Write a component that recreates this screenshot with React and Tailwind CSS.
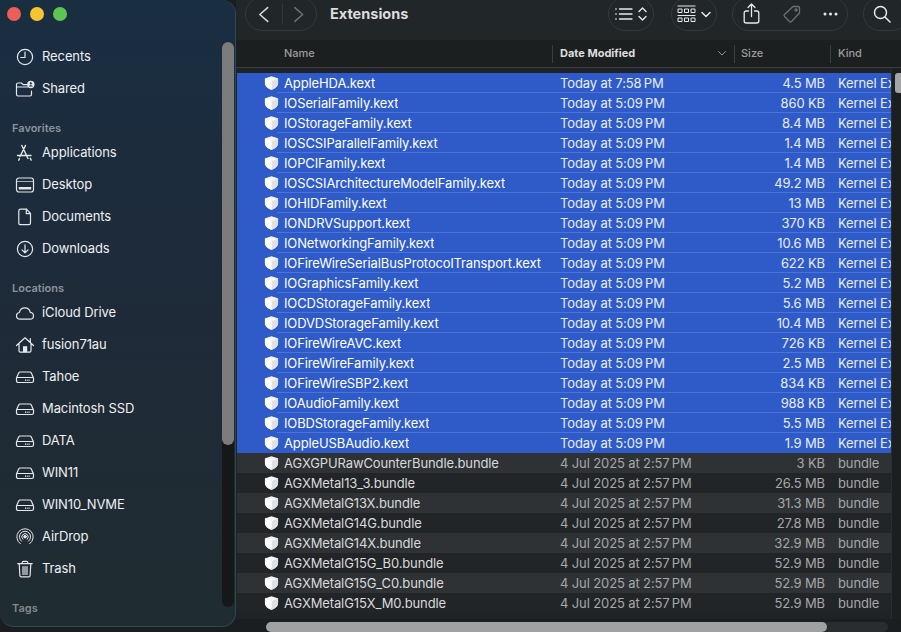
import React from "react";

const S = ({ children, w = 20, h = 20, vb = "0 0 20 20", sw = 1.2, c = "" }) => (
  <svg width={w} height={h} viewBox={vb} fill="none" stroke="currentColor" strokeWidth={sw} strokeLinecap="round" strokeLinejoin="round" className={c}>
    {children}
  </svg>
);

const Drive = () => (
  <S>
    <path d="M5.2 5h9.6c.7 0 1.2.3 1.5 1l2 4.4c.2.4.2.7.2 1.1v2.300c0 1-.7 1.700-1.700 1.700H3.200c-1 0-1.700-.7-1.700-1.700v-2.300c0-.4 0-.7.2-1.100l2-4.400c.3-.7.8-1 1.500-1z" />
    <path d="M2 10.500h16" />
    <path d="M10 13.200h5.500" strokeDasharray="0.9 0.9" strokeWidth="1.500" strokeLinecap="butt" />
  </S>
);

const icons = {
  clock: (
    <S>
      <circle cx="10" cy="10" r="7.600" />
      <path d="M10 5.200V10.500H5.800" />
    </S>
  ),
  shared: (
    <S>
      <path d="M1.500 5.500c0-1 .6-1.500 1.500-1.500h3.500l1.700 1.700h4.300M1.500 5.500V15.600c0 .9.500 1.400 1.400 1.400h12.200c.9 0 1.400-.5 1.400-1.400V12" />
      <path d="M1.500 8h11" />
      <circle cx="15.800" cy="5.500" r="3.700" fill="currentColor" stroke="none" />
      <circle cx="15.800" cy="4.400" r="1.100" fill="#1b2d40" stroke="none" />
      <path d="M13.800 7.600c.4-1 1.100-1.400 2-1.400s1.600.4 2 1.400z" fill="#1b2d40" stroke="none" />
    </S>
  ),
  apps: (
    <S>
      <path d="M10.500 2.500 5 13.500M6.800 2.500 13 15.500M2.500 12.500h13.500M4.500 15.700l-.8 1.500M15.300 15.300l.9 1.800" strokeWidth="1.400" />
    </S>
  ),
  desktop: (
    <S>
      <rect x="1.500" y="3" width="17" height="14" rx="2.500" />
      <path d="M1.500 6.500h17" strokeWidth="0.700" />
      <rect x="3.800" y="12" width="12.400" height="2.600" fill="currentColor" stroke="none" rx=".4" />
    </S>
  ),
  doc: (
    <S>
      <path d="M5.500 2.200h6l4 4.300v9.500c0 1-.7 1.700-1.700 1.700H5.500c-1 0-1.700-.7-1.700-1.700V4c0-1 .7-1.800 1.700-1.800z" />
      <path d="M11.300 2.200v4.500h4.200" />
    </S>
  ),
  down: (
    <S>
      <circle cx="10" cy="10" r="7.600" />
      <path d="M10 5.800v8M7 10.800l3 3 3-3" />
    </S>
  ),
  cloud: (
    <S>
      <path d="M5.200 16.200c-2.200 0-3.700-1.500-3.700-3.400 0-1.800 1.300-3.100 2.900-3.300.5-2.800 2.700-4.700 5.400-4.700 2.800 0 4.900 1.900 5.500 4.500 2 .2 3.200 1.600 3.200 3.400 0 2-1.500 3.500-3.500 3.500z" />
    </S>
  ),
  home: (
    <S>
      <path d="M1.500 10.500 10 2.800l8.500 7.700M15.300 7.500V3.700M4 8.500v7.300c0 .9.500 1.400 1.400 1.400h9.200c.9 0 1.400-.5 1.400-1.400V8.500" />
      <rect x="8" y="11.200" width="4.200" height="6" fill="currentColor" stroke="none" />
    </S>
  ),
  drive: <Drive />,
  airdrop: (
    <S sw={1}>
      <path d="M5.300 16.700A8.200 8.200 0 1 1 14.700 16.700" />
      <path d="M6.500 14.200A5.600 5.600 0 1 1 13.500 14.200" />
      <path d="M7.800 12.200A3.200 3.200 0 1 1 12.200 12.200" />
      <circle cx="10" cy="9.700" r="1.300" fill="currentColor" />
    </S>
  ),
  trash: (
    <S>
      <path d="M2.800 4.700h14.400M7.300 4.500V3.300c0-.6.400-1 1-1h3.400c.6 0 1 .4 1 1v1.200M4.200 4.700l.7 12c.1.800.5 1.200 1.300 1.200h7.600c.8 0 1.200-.4 1.300-1.200l.7-12M8 7.500v8M10 7.500v8M12 7.500v8" />
    </S>
  ),
};

const sidebar = [
  { items: [["clock", "Recents"], ["shared", "Shared"]] },
  { label: "Favorites", items: [["apps", "Applications"], ["desktop", "Desktop"], ["doc", "Documents"], ["down", "Downloads"]] },
  {
    label: "Locations",
    items: [["cloud", "iCloud Drive"], ["home", "fusion71au"], ["drive", "Tahoe"], ["drive", "Macintosh SSD"], ["drive", "DATA"], ["drive", "WIN11"], ["drive", "WIN10_NVME"], ["airdrop", "AirDrop"], ["trash", "Trash"]],
  },
];

const T = "Today at 5:09\u2009PM";
const J = "4 Jul 2025 at 2:57\u2009PM";
const K = "Kernel Extension";
const rows = [
  ["AppleHDA.kext", "Today at 7:58\u2009PM", "4.5 MB"],
  ["IOSerialFamily.kext", T, "860 KB"],
  ["IOStorageFamily.kext", T, "8.4 MB"],
  ["IOSCSIParallelFamily.kext", T, "1.4 MB"],
  ["IOPCIFamily.kext", T, "1.4 MB"],
  ["IOSCSIArchitectureModelFamily.kext", T, "49.2 MB"],
  ["IOHIDFamily.kext", T, "13 MB"],
  ["IONDRVSupport.kext", T, "370 KB"],
  ["IONetworkingFamily.kext", T, "10.6 MB"],
  ["IOFireWireSerialBusProtocolTransport.kext", T, "622 KB"],
  ["IOGraphicsFamily.kext", T, "5.2 MB"],
  ["IOCDStorageFamily.kext", T, "5.6 MB"],
  ["IODVDStorageFamily.kext", T, "10.4 MB"],
  ["IOFireWireAVC.kext", T, "726 KB"],
  ["IOFireWireFamily.kext", T, "2.5 MB"],
  ["IOFireWireSBP2.kext", T, "834 KB"],
  ["IOAudioFamily.kext", T, "988 KB"],
  ["IOBDStorageFamily.kext", T, "5.5 MB"],
  ["AppleUSBAudio.kext", T, "1.9 MB"],
  ["AGXGPURawCounterBundle.bundle", J, "3 KB"],
  ["AGXMetal13_3.bundle", J, "26.5 MB"],
  ["AGXMetalG13X.bundle", J, "31.3 MB"],
  ["AGXMetalG14G.bundle", J, "27.8 MB"],
  ["AGXMetalG14X.bundle", J, "32.9 MB"],
  ["AGXMetalG15G_B0.bundle", J, "52.9 MB"],
  ["AGXMetalG15G_C0.bundle", J, "52.9 MB"],
  ["AGXMetalG15X_M0.bundle", J, "52.9 MB"],
  ["AGXMetalG16G_B0.bundle", J, "37.3 MB"],
];

const Kext = () => (
  <svg width="15" height="16" viewBox="0 0 16 16" className="shrink-0">
    <path d="M8 .7 14.600 2.800c.3.100.4.300.4.600v4.600c0 3.300-2.600 5.700-6.600 7.300a1 1 0 0 1-.8 0C3.600 13.700 1 11.300 1 8V3.400c0-.3.100-.5.400-.6z" fill="#f4f5f6" />
    <path d="M8 6.200 15 3.200V8c0 3.300-2.600 5.700-6.600 7.300-.2.100-.3.100-.4.100z" fill="#dfe1e4" />
    <path d="M8 6.200 1 3.200V8c0 3.300 2.600 5.700 6.600 7.300.2.100.3.100.4.100z" fill="#ffffff" />
  </svg>
);

const Row = ({ r, i, selected, last }) => (
  <div className={`flex h-5 shrink-0 items-center pr-[10px] text-[13px] leading-5 tracking-[-0.12px] ${selected ? "bg-[#2f5bc9] text-white" : i % 2 === 1 ? "bg-[#2e3234] text-[#d9dadb]" : "bg-[#212527] text-[#d9dadb]"}`}>
    <div className="relative flex h-5 w-full items-center">
      <div className="flex w-[323px] shrink-0 items-center pl-[27px]">
        <Kext />
        <span className="ml-[5px] truncate">{r[0]}</span>
      </div>
      <span className={`w-[180px] shrink-0 whitespace-nowrap ${selected ? "text-[#e9edf9]" : "text-[#a6a8a9]"}`}>{r[1]}</span>
      <span className={`w-[85px] shrink-0 whitespace-nowrap text-right ${selected ? "text-[#e9edf9]" : "text-[#a6a8a9]"}`}>{r[2]}</span>
      <span className={`ml-[13px] min-w-0 flex-1 overflow-hidden whitespace-nowrap ${selected ? "text-[#e9edf9]" : "text-[#a6a8a9]"}`}>{selected ? K : "bundle"}</span>
      {selected && !last && <div className="absolute right-0 bottom-0 left-[40px] h-px bg-[#4b74d6]" />}
    </div>
  </div>
);

const Divider = () => <div className="h-[18px] w-px shrink-0 bg-[#3c3f40]" />;

export default function App() {
  return (
    <div className="flex h-[632px] w-[901px] overflow-hidden bg-[#1b1e20] font-['Inter','Liberation_Sans',sans-serif] antialiased">
      {/* Sidebar */}
      <aside className="relative h-[627px] w-[236px] shrink-0 overflow-hidden rounded-b-[14px] rounded-tr-[14px] border-r border-b border-[#2d4a50] bg-gradient-to-b from-[#1a2e42] via-[#1e2a38] to-[#1f2c30]">
        <div className="flex gap-[9px] pt-[7px] pl-[7px]">
          <span className="h-[14px] w-[14px] rounded-full bg-[#ec5f58]" />
          <span className="h-[14px] w-[14px] rounded-full bg-[#f5c430]" />
          <span className="h-[14px] w-[14px] rounded-full bg-[#5fc552]" />
        </div>
        <nav className="pt-[19px]">
          {sidebar.map((sec, idx) => (
            <div key={idx} className={idx ? "mt-4" : ""}>
              {sec.label && <div className="h-4 pl-3 text-[11px] leading-4 font-semibold text-[#8a939b]">{sec.label}</div>}
              {sec.items.map(([ic, label]) => (
                <div key={label} className="flex h-8 items-center pt-[2px] text-[13px] tracking-[-0.1px] text-[#eef0f2]">
                  <span className="ml-[15px] flex w-[20px] shrink-0 justify-center text-[#e4e8eb]">{icons[ic]}</span>
                  <span className="ml-[7px] whitespace-nowrap">{label}</span>
                </div>
              ))}
            </div>
          ))}
          <div className="mt-4 h-4 pl-3 text-[11px] leading-4 font-semibold text-[#7f8a8b]">Tags</div>
          <div className="flex h-8 items-center text-[13px] text-[#eef0f2]">
            <span className="ml-[19px] h-3 w-3 rounded-full bg-[#ec5f58]" />
            <span className="ml-[11px]">Red</span>
          </div>
        </nav>
        {/* sidebar scrollbar */}
        <div className="absolute top-[42px] right-[1px] flex h-[565px] w-[12px] flex-col rounded-full bg-[#161718]">
          <div className="h-[403px] rounded-full bg-[#7c7c7c]" />
        </div>
      </aside>

      {/* Main */}
      <main className="relative min-w-0 flex-1 overflow-hidden bg-[#1f2325]">
        <header className="flex h-10 items-start bg-[#212628] text-[#e8e9ea]">
          <div className="-mt-[3px] ml-[9px] flex h-[34px] w-[72px] items-center rounded-full border border-[#33393c]">
            <svg width="36" height="24" viewBox="0 0 36 24" fill="none" stroke="#d5d6d7" strokeWidth="1.600" strokeLinecap="round" strokeLinejoin="round"><path d="M22 5.500 14 12.500l8 7" /></svg>
            <div className="h-[20px] w-px bg-[#33393c]" />
            <svg width="34" height="24" viewBox="0 0 34 24" fill="none" stroke="#6d7072" strokeWidth="1.600" strokeLinecap="round" strokeLinejoin="round"><path d="M13 5.500 21 12.500l-8 7" /></svg>
          </div>
          <h1 className="ml-[13px] text-[14.5px] leading-7 font-bold text-[#dcdddd]">Extensions</h1>
          <div className="ml-auto flex">
            <div className="-mt-[3px] flex h-[34px] w-[46px] items-center justify-center gap-[5px] rounded-full border border-[#33393c]">
              <svg width="18" height="14" viewBox="0 0 18 14" fill="none" stroke="currentColor" strokeWidth="1.300" strokeLinecap="round"><path d="M4.500 2H17M4.500 7H17M4.500 12H17M.8 2h.4M.8 7h.4M.8 12h.4" /></svg>
              <svg width="9" height="14" viewBox="0 0 9 14" fill="none" stroke="currentColor" strokeWidth="1.400" strokeLinecap="round" strokeLinejoin="round"><path d="M1 4.500 4.500 1 8 4.500M1 9.500 4.500 13 8 9.500" /></svg>
            </div>
            <div className="-mt-[3px] ml-[17px] flex h-[34px] w-[46px] items-center justify-center gap-[5px] rounded-full border border-[#33393c]">
              <svg width="19" height="18" viewBox="0 0 19 18" fill="none" stroke="currentColor" strokeWidth="1"><path d="M.5 1h18M.5 10.500h18" /><path d="M1 4h4v3.500H1zM7.500 4h4v3.500h-4zM14 4h4v3.500h-4zM1 13h4v3.500H1zM7.500 13h4v3.500h-4zM14 13h4v3.500h-4z" /></svg>
              <svg width="10" height="7" viewBox="0 0 10 7" fill="none" stroke="currentColor" strokeWidth="1.500" strokeLinecap="round" strokeLinejoin="round"><path d="m1 1.500 4 4 4-4" /></svg>
            </div>
            <div className="-mt-[3px] ml-[15px] flex h-[34px] w-[116px] items-center rounded-full border border-[#33393c]">
              <svg className="ml-[10px]" width="17" height="22" viewBox="0 0 17 22" fill="none" stroke="currentColor" strokeWidth="1.300" strokeLinecap="round" strokeLinejoin="round"><path d="M8.500 13.500V1.500M5 4.500l3.500-3.500L12 4.500M5.500 8H3.200C2 8 1.200 8.800 1.200 10v8c0 1.200.8 2 2 2h10.600c1.200 0 2-.8 2-2v-8c0-1.200-.8-2-2-2h-2.300" /></svg>
              <svg className="ml-[22px]" width="20" height="20" viewBox="0 0 20 20" fill="none" stroke="#6d7072" strokeWidth="1.300" strokeLinejoin="round"><path d="M11 2.500h5c.9 0 1.500.6 1.500 1.500v5L9.500 17.500c-.6.600-1.400.6-2 0l-5-5c-.6-.6-.6-1.400 0-2z" /><circle cx="14" cy="6" r="1" /></svg>
              <svg className="ml-[21px]" width="15" height="4" viewBox="0 0 15 4" fill="currentColor"><circle cx="2" cy="2" r="1.500" /><circle cx="7.500" cy="2" r="1.500" /><circle cx="13" cy="2" r="1.500" /></svg>
            </div>
            <div className="-mt-[3px] -mr-[8px] ml-[15px] flex h-[34px] w-[46px] items-center rounded-full border border-[#33393c]">
              <svg className="ml-[9px]" width="18" height="18" viewBox="0 0 18 18" fill="none" stroke="currentColor" strokeWidth="1.500" strokeLinecap="round"><circle cx="7.500" cy="7.500" r="6" /><path d="m12 12 5 5" /></svg>
            </div>
          </div>
        </header>

        {/* Column header */}
        <div className="flex h-[28px] items-center border-b border-[#3a3d3e] bg-[#1c1f20] pr-[9px] text-[11px] text-[#9b9d9e]">
          <span className="w-[316px] shrink-0 pl-[48px] font-medium">Name</span>
          <Divider />
          <span className="ml-[7px] w-[158px] shrink-0 font-bold text-[#dcdddd]">Date Modified</span>
          <svg width="8" height="5" viewBox="0 0 8 5" fill="none" stroke="#8f9192" strokeWidth="1" strokeLinecap="round" strokeLinejoin="round"><path d="m.5.5 3.500 3.500 3.500-3.500" /></svg>
          <span className="w-[8px]" />
          <Divider />
          <span className="ml-[6px] w-[89px] shrink-0 font-medium">Size</span>
          <Divider />
          <span className="ml-[7px] font-medium">Kind</span>
        </div>

        {/* Rows */}
        <div className="flex h-[545px] flex-col overflow-hidden pt-[5px] pl-px">
          {rows.map((r, i) => (
            <Row key={r[0]} r={r} i={i} selected={i < 19} last={i === 18} />
          ))}
        </div>

        {/* Scrollbars */}
        <div className="absolute top-[68px] right-0 bottom-[13px] w-[10px] border-l border-[#2a2d2f] bg-[#1c1f20]">
          <div className="mt-[5px] ml-[3px] h-[20px] w-[6px] rounded-l-[3px] bg-[#a3a5a6]" />
        </div>
        <div className="absolute right-0 bottom-0 left-0 h-[13px] bg-[#1b1e20] pt-[3px]">
          <div className="ml-[30px] h-[10px] w-[622px] rounded-full bg-[#2a2d2f]">
            <div className="h-[10px] w-[561px] rounded-full bg-[#9fa1a2]" />
          </div>
        </div>
      </main>
    </div>
  );
}
